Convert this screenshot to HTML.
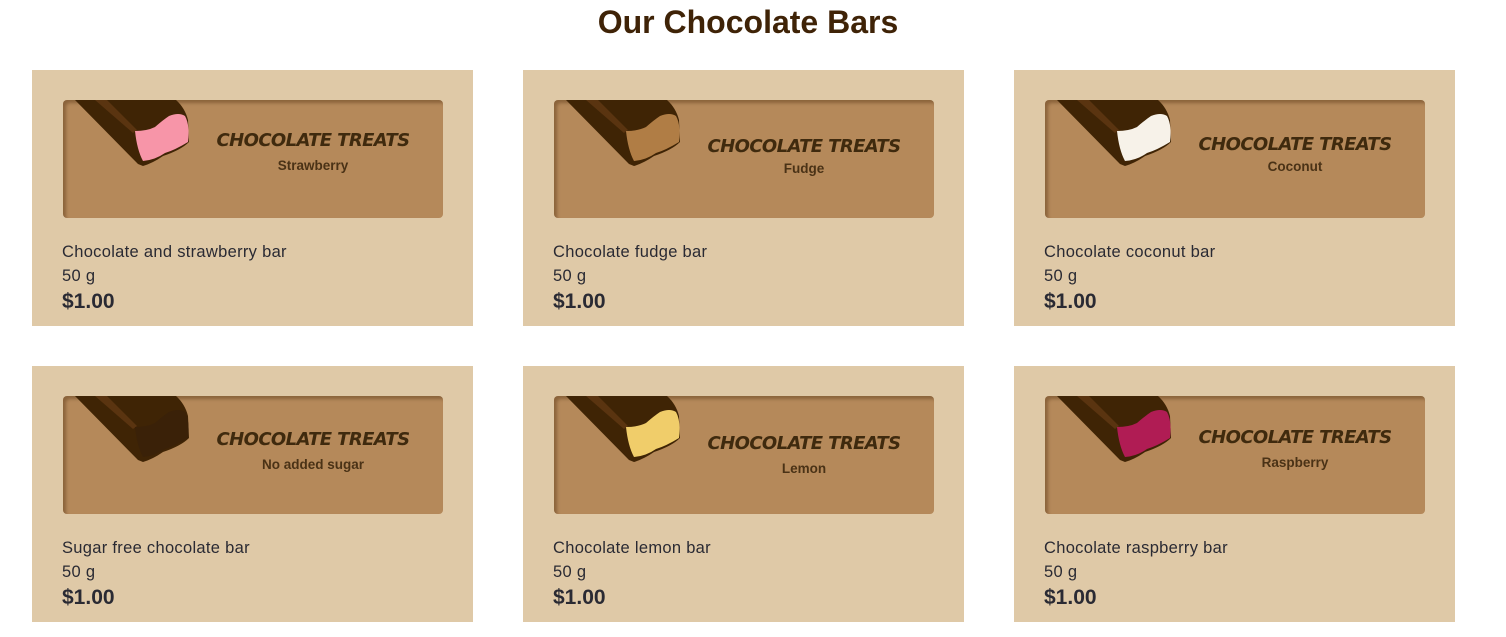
<!DOCTYPE html>
<html><head><style>
body{margin:0;background:#fff;font-family:"Liberation Sans",sans-serif;}
h1{margin:0;position:absolute;top:4px;left:0;width:1496px;text-align:center;font-size:32px;font-weight:600;color:#3f2307;}
.card{position:absolute;width:441px;height:256px;background:#dfc9a7;}
.img{position:absolute;left:31px;top:30px;width:380px;height:118px;background:#b5895a;border-radius:4px;box-shadow:inset 3px 3px 3px rgba(60,30,0,.35);overflow:hidden;}
.img svg{position:absolute;left:0;top:0}
.t{position:absolute;left:130px;width:240px;text-align:center;color:#3f2a0e;}
.t b{display:block;font-family:"DejaVu Sans",sans-serif;font-style:italic;font-weight:900;font-size:18px;letter-spacing:-0.6px;}
.t span{display:block;font-size:13.5px;font-weight:bold;margin-top:7px;color:#4a3216}
.d{position:absolute;left:30px;top:170px;color:#2a2a33;font-size:16.5px;line-height:24px;letter-spacing:0.3px}
.p{font-weight:bold;font-size:21px;line-height:28px;letter-spacing:0}
</style></head><body>
<h1>Our Chocolate Bars</h1>
<svg width="0" height="0" style="position:absolute"><defs>
<g id="bar"><path d="M12 0 L113 0 Q122 8 125 20 L126 42 Q118 50 100 56 Q90 63 80 66 L75 64 Z" fill="#3f2405"/><path d="M32 0 L44 0 L74 30 L70 33 Z" fill="#5a3410"/></g>
<path id="face" d="M72 31 Q84 31 92 27 Q100 20 106 16 Q116 12 122 16 Q127 25 125 42 Q112 50 102 53 Q92 60 80 61 Q74 50 72 31Z"/>
</defs></svg>
<div class="card" style="left:32px;top:70px"><div class="img"><svg width="380" height="118"><use href="#bar"/><use href="#face" fill="#f795a8"/></svg><div class="t" style="top:30px"><b>CHOCOLATE TREATS</b><span>Strawberry</span></div></div><div class="d">Chocolate and strawberry bar<br>50 g<div class="p">$1.00</div></div></div>
<div class="card" style="left:523px;top:70px"><div class="img"><svg width="380" height="118"><use href="#bar"/><use href="#face" fill="#b07d45"/></svg><div class="t" style="top:36px"><b>CHOCOLATE TREATS</b><span style="margin-top:4px">Fudge</span></div></div><div class="d">Chocolate fudge bar<br>50 g<div class="p">$1.00</div></div></div>
<div class="card" style="left:1014px;top:70px"><div class="img"><svg width="380" height="118"><use href="#bar"/><use href="#face" fill="#f7f2e9"/></svg><div class="t" style="top:34px"><b>CHOCOLATE TREATS</b><span style="margin-top:4px">Coconut</span></div></div><div class="d">Chocolate coconut bar<br>50 g<div class="p">$1.00</div></div></div>
<div class="card" style="left:32px;top:366px"><div class="img"><svg width="380" height="118"><use href="#bar"/><use href="#face" fill="#3a2108"/></svg><div class="t" style="top:33px"><b>CHOCOLATE TREATS</b><span>No added sugar</span></div></div><div class="d">Sugar free chocolate bar<br>50 g<div class="p">$1.00</div></div></div>
<div class="card" style="left:523px;top:366px"><div class="img"><svg width="380" height="118"><use href="#bar"/><use href="#face" fill="#f0cd6a"/></svg><div class="t" style="top:37px"><b>CHOCOLATE TREATS</b><span>Lemon</span></div></div><div class="d">Chocolate lemon bar<br>50 g<div class="p">$1.00</div></div></div>
<div class="card" style="left:1014px;top:366px"><div class="img"><svg width="380" height="118"><use href="#bar"/><use href="#face" fill="#b01c54"/></svg><div class="t" style="top:31px"><b>CHOCOLATE TREATS</b><span>Raspberry</span></div></div><div class="d">Chocolate raspberry bar<br>50 g<div class="p">$1.00</div></div></div>
</body></html>
